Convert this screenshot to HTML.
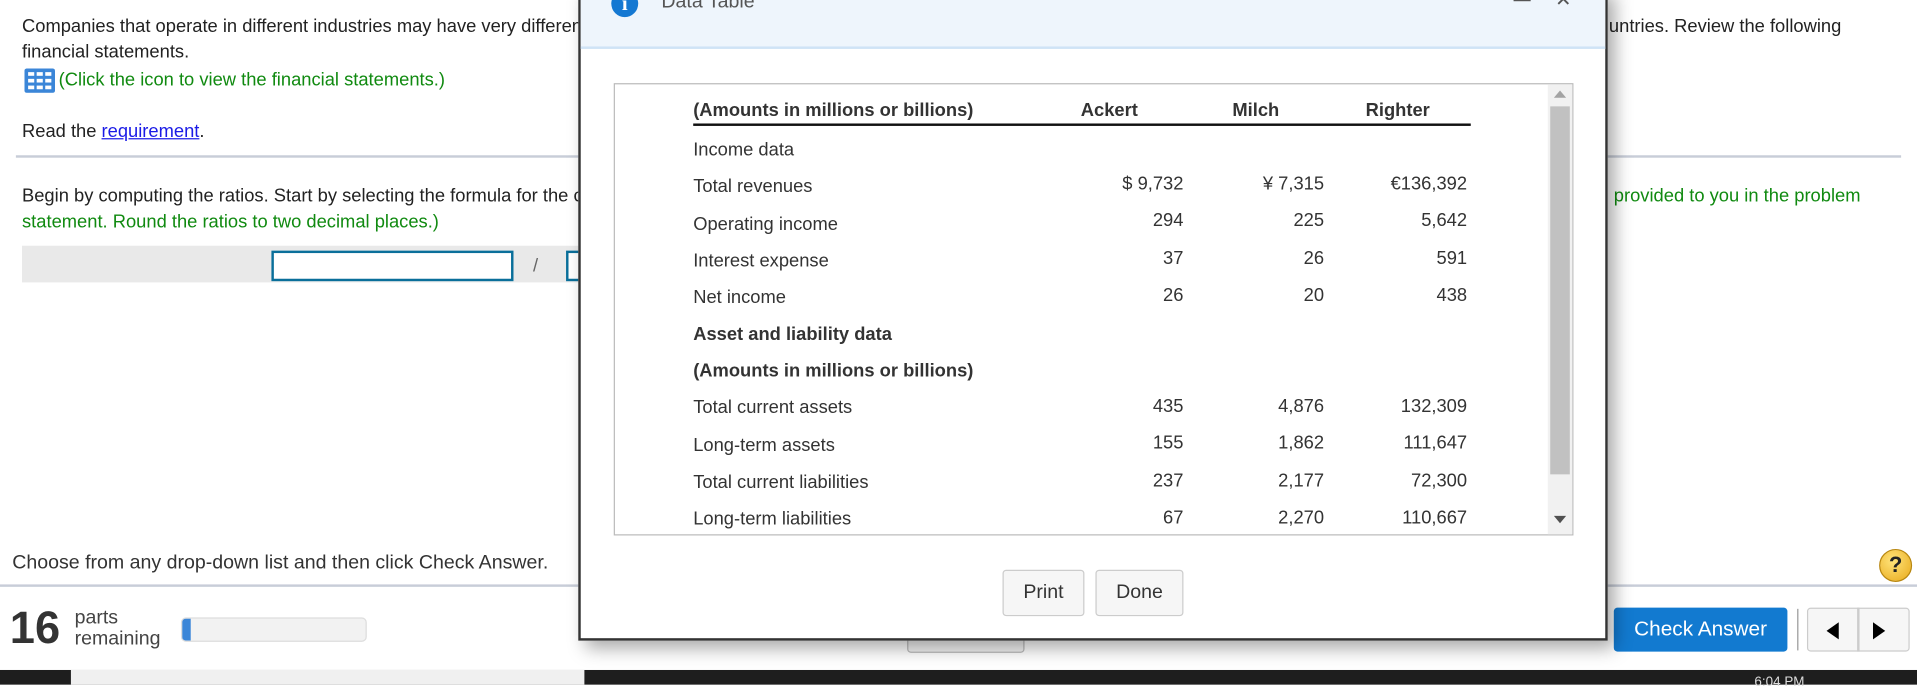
<!DOCTYPE html>
<html><head><meta charset="utf-8"><style>
html,body{margin:0;padding:0;background:#fff;overflow:hidden;width:1917px;height:684px}
#w{position:absolute;left:0;top:0;width:1568px;height:560px;transform:scale(1.22258);transform-origin:0 0;font-family:"Liberation Sans",Arial,sans-serif;color:#222;font-size:15px}
.a{position:absolute;white-space:nowrap}
.g{color:#108a10}
.r{position:absolute;text-align:right;white-space:nowrap}
.row{position:absolute;left:567px;font-size:15px;color:#333}
</style></head><body><div id="w">
<div class="a" style="left:18px;top:13px">Companies that operate in different industries may have very different ratios.</div>
<div class="a" style="left:1316px;top:13px">untries. Review the following</div>
<div class="a" style="left:18px;top:34px">financial statements.</div>
<svg class="a" style="left:20px;top:56px" width="25" height="20" viewBox="0 0 25 20"><rect x="0" y="0" width="25" height="20" rx="2" fill="#3b86d8"/><g fill="#fff"><rect x="3" y="3" width="5" height="3"/><rect x="10" y="3" width="5" height="3"/><rect x="17" y="3" width="5" height="3"/><rect x="3" y="8.5" width="5" height="3"/><rect x="10" y="8.5" width="5" height="3"/><rect x="17" y="8.5" width="5" height="3"/><rect x="3" y="14" width="5" height="3"/><rect x="10" y="14" width="5" height="3"/><rect x="17" y="14" width="5" height="3"/></g></svg>
<div class="a g" style="left:48px;top:57px">(Click the icon to view the financial statements.)</div>
<div class="a" style="left:18px;top:99px">Read the <span style="color:#1a1ae6;text-decoration:underline">requirement</span>.</div>
<div class="a" style="left:13px;top:127px;width:1542px;height:2px;background:#c8cdd8"></div>
<div class="a" style="left:18px;top:152px">Begin by computing the ratios. Start by selecting the formula for the current ratio.</div>
<div class="a g" style="left:1320px;top:152px">provided to you in the problem</div>
<div class="a g" style="left:18px;top:173px">statement. Round the ratios to two decimal places.)</div>
<div class="a" style="left:18px;top:201px;width:460px;height:30px;background:#e9e9e9"></div>
<div class="a" style="left:222px;top:205px;width:194px;height:21px;border:2px solid #0a6f9a;background:#fff"></div>
<div class="a" style="left:436px;top:209px;color:#666">/</div>
<div class="a" style="left:463px;top:205px;width:30px;height:21px;border:2px solid #0a6f9a;background:#fff"></div>
<div class="a" style="left:10px;top:452px;font-size:16px;color:#333">Choose from any drop-down list and then click Check Answer.</div>
<div class="a" style="left:0;top:478px;width:1568px;height:2px;background:#c8cdd8"></div>
<div class="a" style="left:1537px;top:449px;width:25px;height:25px;border-radius:50%;background:radial-gradient(circle at 40% 35%,#ffe37a,#e8a91a);border:1px solid #b88710;text-align:center;font-weight:bold;font-size:18px;line-height:25px;color:#222">?</div>
<div class="a" style="left:8px;top:494px;font-size:37px;font-weight:bold;color:#333;line-height:40px">16</div>
<div class="a" style="left:61px;top:497px;font-size:16px;line-height:17px;color:#444">parts<br>remaining</div>
<div class="a" style="left:148px;top:505px;width:152px;height:20px;border:1px solid #ddd;border-radius:4px;background:#f2f2f2;box-sizing:border-box;overflow:hidden"><div style="width:7px;height:100%;background:#3b86d8"></div></div>
<div class="a" style="left:742px;top:505px;width:94px;height:27px;border:1px solid #bbb;background:#f4f4f4;border-radius:3px"></div>
<div class="a" style="left:1320px;top:497px;width:142px;height:36px;background:#127ad0;border-radius:3px;color:#fff;font-size:17px;line-height:36px;text-align:center">Check Answer</div>
<div class="a" style="left:1470px;top:498px;width:1px;height:34px;background:#999"></div>
<div class="a" style="left:1478px;top:497px;width:82px;height:34px;border:1px solid #ccc;border-radius:3px;background:#f6f6f6"></div>
<div class="a" style="left:1519px;top:497px;width:2px;height:36px;background:#ccc"></div>
<svg class="a" style="left:1490px;top:506px" width="70" height="20"><polygon points="14,3 14,17 4,10" fill="#000"/><polygon points="42,3 42,17 52,10" fill="#000"/></svg>
<div class="a" style="left:0;top:548px;width:1568px;height:12px;background:#1e1e1e"></div>
<div class="a" style="left:58px;top:548px;width:420px;height:12px;background:#f0f0f0"></div>
<div class="a" style="left:1435px;top:552px;font-size:11px;color:#ddd">6:04 PM</div>
<!-- dialog -->
<div class="a" style="left:473px;top:-10px;width:838px;height:530px;border:2px solid #333;background:#fff;box-shadow:6px 6px 14px rgba(0,0,0,.35)"></div>
<div class="a" style="left:475px;top:-10px;width:838px;height:48px;background:#eef5fc;border-bottom:2px solid #cfe3f6"></div>
<div class="a" style="left:500px;top:-8px;width:22px;height:22px;border-radius:50%;background:#1478d2;color:#fff;font-weight:bold;text-align:center;font-family:'Liberation Serif',serif;font-size:17px;line-height:22px">i</div>
<div class="a" style="left:541px;top:-7px;font-size:16px;color:#555">Data Table</div>
<div class="a" style="left:1238px;top:-2px;width:14px;height:3px;background:#555"></div>
<div class="a" style="left:1272px;top:-10px;font-size:16px;color:#555">✕</div>
<div class="a" style="left:502px;top:68px;width:783px;height:368px;border:1px solid #bbb"></div>
<div class="a" style="left:1266px;top:69px;width:20px;height:368px;background:#f1f1f1"></div>
<div class="a" style="left:1268px;top:87px;width:16px;height:301px;background:#c1c1c1"></div>
<svg class="a" style="left:1270px;top:73px" width="12" height="8"><polygon points="6,1 11,7 1,7" fill="#a3a3a3"/></svg>
<svg class="a" style="left:1270px;top:421px" width="12" height="8"><polygon points="1,1 11,1 6,7" fill="#505050"/></svg>
<div class="row" style="top:82px;font-weight:bold">(Amounts in millions or billions)</div>
<div class="a" style="left:884px;top:82px;font-weight:bold;color:#333">Ackert</div>
<div class="a" style="left:1008px;top:82px;font-weight:bold;color:#333">Milch</div>
<div class="a" style="left:1117px;top:82px;font-weight:bold;color:#333">Righter</div>
<div class="a" style="left:567px;top:101px;width:636px;height:2px;background:#111"></div>
<div class="row" style="top:114px">Income data</div>
<div class="row" style="top:144px">Total revenues</div>
<div class="row" style="top:175px">Operating income</div>
<div class="row" style="top:205px">Interest expense</div>
<div class="row" style="top:235px">Net income</div>
<div class="row" style="top:265px;font-weight:bold">Asset and liability data</div>
<div class="row" style="top:295px;font-weight:bold">(Amounts in millions or billions)</div>
<div class="row" style="top:325px">Total current assets</div>
<div class="row" style="top:356px">Long-term assets</div>
<div class="row" style="top:386px">Total current liabilities</div>
<div class="row" style="top:416px">Long-term liabilities</div>
<div class="r" style="left:868px;width:100px;top:136px;color:#333;line-height:30.3px">$ 9,732<br>294<br>37<br>26</div>
<div class="r" style="left:983px;width:100px;top:136px;color:#333;line-height:30.3px">¥ 7,315<br>225<br>26<br>20</div>
<div class="r" style="left:1100px;width:100px;top:136px;color:#333;line-height:30.3px">€136,392<br>5,642<br>591<br>438</div>
<div class="r" style="left:868px;width:100px;top:318px;color:#333;line-height:30.3px">435<br>155<br>237<br>67</div>
<div class="r" style="left:983px;width:100px;top:318px;color:#333;line-height:30.3px">4,876<br>1,862<br>2,177<br>2,270</div>
<div class="r" style="left:1100px;width:100px;top:318px;color:#333;line-height:30.3px">132,309<br>111,647<br>72,300<br>110,667</div>
<div class="a" style="left:820px;top:466px;width:65px;height:36px;border:1px solid #ccc;border-radius:3px;background:#f6f6f6;text-align:center;line-height:36px;color:#333;font-size:16px">Print</div>
<div class="a" style="left:896px;top:466px;width:70px;height:36px;border:1px solid #ccc;border-radius:3px;background:#f6f6f6;text-align:center;line-height:36px;color:#333;font-size:16px">Done</div>
</div></body></html>
